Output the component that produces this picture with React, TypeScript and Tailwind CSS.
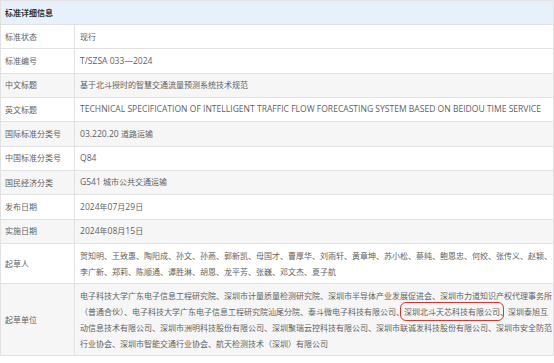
import React from "react";

function mix(text: string): React.ReactNode {
  const parts = text.split(/([\x20-\x7E—]+)/);
  return parts.map((p, i) =>
    /[\x20-\x7E—]/.test(p) && p.trim() !== "" ? (
      <span key={i} className="text-[8.55px]">
        {p}
      </span>
    ) : (
      <React.Fragment key={i}>{p}</React.Fragment>
    )
  );
}

const rows: { label: string; value: string }[] = [
  { label: "标准状态", value: "现行" },
  { label: "标准编号", value: "T/SZSA 033—2024" },
  { label: "中文标题", value: "基于北斗授时的智慧交通流量预测系统技术规范" },
  {
    label: "英文标题",
    value:
      "TECHNICAL SPECIFICATION OF INTELLIGENT TRAFFIC FLOW FORECASTING SYSTEM BASED ON BEIDOU TIME SERVICE",
  },
  { label: "国际标准分类号", value: "03.220.20 道路运输" },
  { label: "中国标准分类号", value: "Q84" },
  { label: "国民经济分类", value: "G541 城市公共交通运输" },
  { label: "发布日期", value: "2024年07月29日" },
  { label: "实施日期", value: "2024年08月15日" },
];

const drafters = [
  "贺知明、王致惠、陶阳成、孙文、孙燕、郭新凯、母国才、曹厚华、刘雨轩、黄章坤、苏小松、蔡纯、鲍恩忠、何姣、张传义、赵颖、",
  "李广新、郑莉、陈顺通、谭胜淋、胡恩、龙平芳、张巍、邓文杰、夏子航",
];

export default function App() {
  return (
    <div
      className="w-[554px] h-[363px] bg-white text-[8px] text-[#5f5f5f]"
      style={{ fontFamily: '"Open Sans", "Noto Sans CJK SC", sans-serif' }}
    >
      <div className="border border-[#e2e2e2] border-b-0">
        <div className="h-[24px] bg-[#e6f1fc] border-b border-[#e2e2e2] flex items-center pl-[4px] font-bold text-[#333]">
          标准详细信息
        </div>
        {rows.map((r, i) => (
          <div
            key={r.label}
            className={`flex h-[24.35px] border-b border-[#e2e2e2] ${i % 2 === 0 && i >= 2 ? "bg-[#f6f6f6]" : "bg-white"}`}
          >
            <div className="w-[74px] shrink-0 border-r border-[#e2e2e2] flex items-center pl-[4px]">
              {r.label}
            </div>
            <div className="flex-1 flex items-center pl-[5px] whitespace-nowrap">
              <span>{mix(r.value)}</span>
            </div>
          </div>
        ))}
        <div className="flex h-[40px] border-b border-[#e2e2e2] bg-white">
          <div className="w-[74px] shrink-0 border-r border-[#e2e2e2] flex items-center pl-[4px]">
            起草人
          </div>
          <div className="flex-1 pl-[5px] py-[4px] leading-[16px] whitespace-nowrap">
            {drafters.map((d) => (
              <div key={d}>{d}</div>
            ))}
          </div>
        </div>
        <div className="flex h-[72px] border-b border-[#e2e2e2] bg-[#f6f6f6]">
          <div className="w-[74px] shrink-0 border-r border-[#e2e2e2] flex items-center pl-[4px]">
            起草单位
          </div>
          <div className="flex-1 pl-[5px] py-[4px] leading-[16px] whitespace-nowrap">
            <div>电子科技大学广东电子信息工程研究院、深圳市计量质量检测研究院、深圳市半导体产业发展促进会、深圳市力道知识产权代理事务所</div>
            <div>
              （普通合伙）、电子科技大学广东电子信息工程研究院汕尾分院、泰斗微电子科技有限公司、
              <span className="rounded-[2px] outline outline-[1.5px] outline-[#e3302a] outline-offset-[3px]">
                深圳北斗天芯科技有限公司
              </span>
              、深圳泰旭互
            </div>
            <div>动信息技术有限公司、深圳市洲明科技股份有限公司、深圳聚瑞云控科技有限公司、深圳市联诚发科技股份有限公司、深圳市安全防范</div>
            <div>行业协会、深圳市智能交通行业协会、航天检测技术（深圳）有限公司</div>
          </div>
        </div>
      </div>
    </div>
  );
}
